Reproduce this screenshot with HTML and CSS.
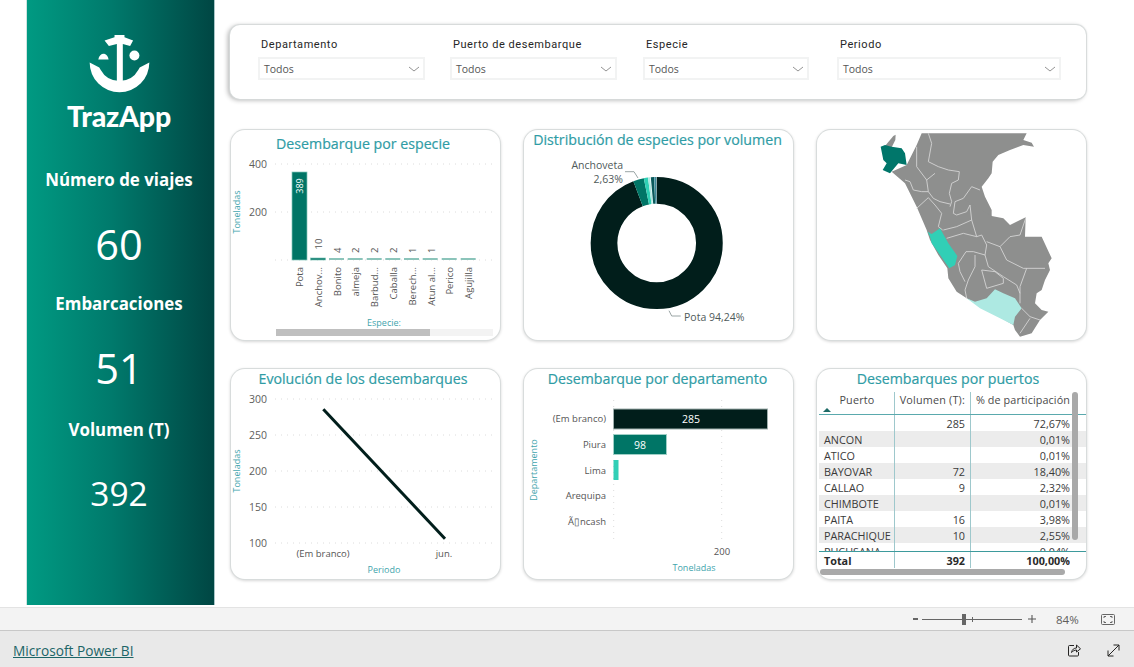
FILE: index.html
```
<!DOCTYPE html>
<html lang="es">
<head>
<meta charset="utf-8">
<title>TrazApp</title>
<link rel="stylesheet" href="styles.css">
</head>
<body>
<div class="report">
  <aside class="sidebar">
    <svg class="logo" viewBox="80 30 200 190" aria-hidden="true">
      <path class="logo-w" d="M165 45H195V52L221 62 212 78 190 72V190H172V72L148 78 135 62 165 52Z"/>
      <path class="logo-w" d="M90 128A90 90 0 0 0 270 128L241 143 237 150A65 65 0 0 1 123 150L119 143Z"/>
      <circle class="logo-w" cx="225" cy="107" r="15"/>
      <path class="logo-w" d="M116 119C118 107 126 101 134 102 141 103 146 111 147 119Z"/>
    </svg>
    <div class="brand">TrazApp</div>
    <div class="metric-label first">Número de viajes</div>
    <div class="metric-value">60</div>
    <div class="metric-label">Embarcaciones</div>
    <div class="metric-value">51</div>
    <div class="metric-label last">Volumen (T)</div>
    <div class="metric-value small">392</div>
  </aside>

  <main class="main">
    <section class="filters">
      <div class="slicer s1">
        <div class="slicer-title">Departamento</div>
        <div class="dropdown"><span>Todos</span><svg class="chev" viewBox="0 0 10 4"><path d="M0 0L5 4 10 0"/></svg></div>
      </div>
      <div class="slicer s2">
        <div class="slicer-title">Puerto de desembarque</div>
        <div class="dropdown"><span>Todos</span><svg class="chev" viewBox="0 0 10 4"><path d="M0 0L5 4 10 0"/></svg></div>
      </div>
      <div class="slicer s3">
        <div class="slicer-title">Especie</div>
        <div class="dropdown"><span>Todos</span><svg class="chev" viewBox="0 0 10 4"><path d="M0 0L5 4 10 0"/></svg></div>
      </div>
      <div class="slicer s4">
        <div class="slicer-title">Periodo</div>
        <div class="dropdown"><span>Todos</span><svg class="chev" viewBox="0 0 10 4"><path d="M0 0L5 4 10 0"/></svg></div>
      </div>
    </section>

    <section class="cards">
      <article class="card">
        <h2 class="title low off">Desembarque por especie</h2>
        <svg class="chart" viewBox="231 156 269 184">
          <g class="grid"><path d="M275 164H493M275 212H493M275 260H493"/></g>
          <text class="tick" x="267" y="168" text-anchor="end">400</text>
          <text class="tick" x="267" y="216" text-anchor="end">200</text>
          <text class="axis" transform="translate(240 212) rotate(-90)" text-anchor="middle">Toneladas</text>
          <rect class="bar-main" x="292" y="172" width="15" height="88"/>
          <rect class="bar-main" x="310.5" y="258" width="15" height="2"/>
          <path class="bar-thin" d="M329 259H344M347.700 259H362.700M366.700 259H381.700M385.300 259H400.300M404 259H419M422.700 259H437.700M441.700 259H456.700M460.700 259H475.700"/>
          <text class="dl-w" transform="translate(303 186) rotate(-90)" text-anchor="middle">389</text>
          <g class="dl">
            <text transform="translate(322 249.500) rotate(-90)">10</text>
            <text transform="translate(340.500 253) rotate(-90)">4</text>
            <text transform="translate(359 253) rotate(-90)">2</text>
            <text transform="translate(378 253) rotate(-90)">2</text>
            <text transform="translate(396.500 253) rotate(-90)">2</text>
            <text transform="translate(415.500 253) rotate(-90)">1</text>
            <text transform="translate(435 253) rotate(-90)">1</text>
          </g>
          <g class="cat rot">
            <text transform="translate(303 267) rotate(-90)">Pota</text>
            <text transform="translate(322 267) rotate(-90)">Anchov...</text>
            <text transform="translate(340.500 267) rotate(-90)">Bonito</text>
            <text transform="translate(359 267) rotate(-90)">almeja</text>
            <text transform="translate(378 267) rotate(-90)">Barbud...</text>
            <text transform="translate(396.500 267) rotate(-90)">Caballa</text>
            <text transform="translate(415.500 267) rotate(-90)">Berech...</text>
            <text transform="translate(435 267) rotate(-90)">Atun al...</text>
            <text transform="translate(453 267) rotate(-90)">Perico</text>
            <text transform="translate(472 267) rotate(-90)">Agujilla</text>
          </g>
          <text class="axis" x="384" y="326" text-anchor="middle">Especie:</text>
          <rect class="track" x="430" y="329" width="63" height="7"/>
          <rect class="thumb" x="276" y="329" width="154" height="7"/>
        </svg>
      </article>

      <article class="card">
        <h2 class="title">Distribución de especies por volumen</h2>
        <svg class="chart" viewBox="524 156 269 184">
          <g class="donut">
            <circle class="d0" cx="656.700" cy="243" r="52.700" pathLength="100" stroke-dasharray="94.240 5.760" stroke-dashoffset="25"/>
            <circle class="d1" cx="656.700" cy="243" r="52.700" pathLength="100" stroke-dasharray="2.630 97.370" stroke-dashoffset="-69.240"/>
            <circle class="d2" cx="656.700" cy="243" r="52.700" pathLength="100" stroke-dasharray="1 99" stroke-dashoffset="-71.870"/>
            <circle class="d3" cx="656.700" cy="243" r="52.700" pathLength="100" stroke-dasharray="0.500 99.500" stroke-dashoffset="-72.870"/>
            <circle class="d4" cx="656.700" cy="243" r="52.700" pathLength="100" stroke-dasharray="0.800 99.200" stroke-dashoffset="-73.550"/>
            <circle class="d5" cx="656.700" cy="243" r="52.700" pathLength="100" stroke-dasharray="0.500 99.500" stroke-dashoffset="-74.400"/>
          </g>
          <path class="leader" d="M625 171.700H634L638 178M669 310.700L671.700 316H680.700"/>
          <g class="dlab">
            <text x="623" y="169" text-anchor="end">Anchoveta</text>
            <text x="623" y="183" text-anchor="end">2,63%</text>
            <text x="684" y="321">Pota 94,24%</text>
          </g>
        </svg>
      </article>

      <article class="card map-card">
        <svg class="chart" viewBox="-129 0 807 630">
          <path class="country" d="M185 10H500L490 30 515 38 522 50 490 45 450 60 415 75 398 95 395 130 385 145 365 170 375 200 395 240 395 258 300 300 170 230 135 160 95 125 140 105 170 45Z"/>
          <path class="country" d="M395 258L430 265 450 285 497 262 495 320 545 320 575 385 565 400 570 420 555 450 545 480 530 490 525 520 545 540 565 545 540 570 515 610 480 620 465 600 460 585 320 505 290 485 265 445 262 415 235 375 210 330 200 300 170 230 300 200Z"/>
          <path class="country" d="M75 48L100 18 107 14 106 30 95 52Z"/>
          <path class="piura" d="M62 50L70 90 80 100 68 120 90 130 115 100 140 105 135 70 125 55 95 50 75 45Z"/>
          <path class="lima" d="M203 305L215 312 240 295 265 340 292 378 285 405 268 415 240 375 215 340 210 320Z"/>
          <path class="areq" d="M320 505L345 515 380 505 405 478 430 490 465 505 485 535 465 560 460 585 420 565 360 535Z"/>
          <path class="borders" d="M205 10L215 40 205 95 235 110 265 120 298 125 295 150 275 160 268 190 275 215 270 230M170 50L170 110 200 150 225 130M200 150L205 185 220 205 240 215 270 222M135 150L150 155 160 180 185 185 205 185M170 235L205 203 225 225 245 250 235 290 248 300M280 250L285 215 310 205 335 170 360 180M280 250L290 255 320 245 330 225 335 270 290 290 250 300M335 270L350 320 310 310 260 325M350 320L365 315 380 345 375 375 340 365 318 365 295 400M380 335L420 350 450 320 480 315 497 265M420 350L440 390 490 415 555 415M500 415L480 470 480 520M345 375L345 410 325 450 315 480 320 505M295 400L300 425 315 455M365 420L380 475 430 460 430 445 405 425ZM375 375L385 410 430 440 470 465 480 490M485 535L510 560 540 570M510 565L480 610"/>
        </svg>
      </article>

      <article class="card">
        <h2 class="title off">Evolución de los desembarques</h2>
        <svg class="chart" viewBox="231 395 269 184">
          <g class="grid"><path d="M275 399H493M275 435H493M275 471H493M275 507H493M275 543H493"/></g>
          <g class="tick">
            <text x="267" y="403" text-anchor="end">300</text>
            <text x="267" y="439" text-anchor="end">250</text>
            <text x="267" y="475" text-anchor="end">200</text>
            <text x="267" y="511" text-anchor="end">150</text>
            <text x="267" y="547" text-anchor="end">100</text>
          </g>
          <text class="axis" transform="translate(240 471) rotate(-90)" text-anchor="middle">Toneladas</text>
          <path class="line" d="M323.300 409.300L445 538.700"/>
          <g class="cat">
            <text x="323" y="557" text-anchor="middle">(Em branco)</text>
            <text x="444" y="557" text-anchor="middle">jun.</text>
          </g>
          <text class="axis" x="384" y="573" text-anchor="middle">Periodo</text>
        </svg>
      </article>

      <article class="card">
        <h2 class="title">Desembarque por departamento</h2>
        <svg class="chart" viewBox="524 395 269 184">
          <g class="grid"><path d="M613.700 400V544M721.700 400V544"/></g>
          <rect class="b0" x="613.500" y="409" width="154" height="20"/>
          <rect class="b1" x="613.500" y="434.500" width="53" height="20"/>
          <rect class="b2" x="613.500" y="460" width="5" height="20"/>
          <text class="dl-w big" x="691" y="423" text-anchor="middle">285</text>
          <text class="dl-w big" x="640" y="449" text-anchor="middle">98</text>
          <g class="cat">
            <text x="606" y="422" text-anchor="end">(Em branco)</text>
            <text x="606" y="448" text-anchor="end">Piura</text>
            <text x="606" y="474" text-anchor="end">Lima</text>
            <text x="606" y="499" text-anchor="end">Arequipa</text>
            <text x="606" y="525" text-anchor="end">Ã▯ncash</text>
            <text x="722" y="555" text-anchor="middle">200</text>
          </g>
          <text class="axis" transform="translate(537 470) rotate(-90)" text-anchor="middle">Departamento</text>
          <text class="axis" x="694" y="571" text-anchor="middle">Toneladas</text>
        </svg>
      </article>

      <article class="card table-card">
        <h2 class="title short">Desembarques por puertos</h2>
        <div class="tbl-wrap">
          <div class="tbl-head row">
            <div class="cell puerto-h">Puerto<i class="sort"></i></div>
            <div class="cell num vol">Volumen (T):</div>
            <div class="cell num last-col">% de participación</div>
          </div>
          <div class="tbl-body">
            <div class="row"><div class="cell"></div><div class="cell num vol">285</div><div class="cell num last-col">72,67%</div></div>
            <div class="row alt"><div class="cell">ANCON</div><div class="cell num vol"></div><div class="cell num last-col">0,01%</div></div>
            <div class="row"><div class="cell">ATICO</div><div class="cell num vol"></div><div class="cell num last-col">0,01%</div></div>
            <div class="row alt"><div class="cell">BAYOVAR</div><div class="cell num vol">72</div><div class="cell num last-col">18,40%</div></div>
            <div class="row"><div class="cell">CALLAO</div><div class="cell num vol">9</div><div class="cell num last-col">2,32%</div></div>
            <div class="row alt"><div class="cell">CHIMBOTE</div><div class="cell num vol"></div><div class="cell num last-col">0,01%</div></div>
            <div class="row"><div class="cell">PAITA</div><div class="cell num vol">16</div><div class="cell num last-col">3,98%</div></div>
            <div class="row alt"><div class="cell">PARACHIQUE</div><div class="cell num vol">10</div><div class="cell num last-col">2,55%</div></div>
            <div class="row"><div class="cell">PUCUSANA</div><div class="cell num vol"></div><div class="cell num last-col">0,04%</div></div>
          </div>
          <div class="tbl-total row">
            <div class="cell">Total</div><div class="cell num vol">392</div><div class="cell num last-col">100,00%</div>
          </div>
          <div class="vscroll"></div>
          <div class="hscroll"></div>
        </div>
      </article>
    </section>
  </main>
</div>

<div class="zoombar">
  <span class="zoom-minus"></span>
  <div class="slider"><i class="tick-mark"></i><i class="knob"></i></div>
  <svg class="zoom-plus" viewBox="0 0 9 9"><path d="M0 4.500H9M4.500 0V9"/></svg>
  <span class="zoom-pct">84%</span>
  <svg class="fit" viewBox="0 0 14 11"><rect x=".5" y=".5" width="13" height="10" rx="1"/><path d="M3 4V2.500H5M9 2.500H11V4M11 7V8.500H9M5 8.500H3V7"/></svg>
</div>
<footer class="footer">
  <a class="pbi" href="#">Microsoft Power BI</a>
  <svg class="ficon share" viewBox="0 0 14 14"><path d="M7 2.500H2.500A1 1 0 0 0 1.500 3.500V12A1 1 0 0 0 2.500 13H10.500A1 1 0 0 0 11.500 12V9"/><path d="M4.500 9.500C5 6.500 7 5 9.500 5V2L13.500 5.800 9.500 9V7C7.500 7 6 8 4.500 9.500Z"/></svg>
  <svg class="ficon expand" viewBox="0 0 13 13"><path d="M1 12L12 1M6.500 1H12V6.500M1 6.500V12H6.500"/></svg>
</footer>
</body>
</html>
```
FILE: styles.css
```
* { box-sizing: border-box; }
html, body { margin: 0; height: 667px; overflow: hidden; background: #fff; }
body { font-family: "Open Sans", "Liberation Sans", sans-serif; display: flex; flex-direction: column; }

.report { height: 607px; display: flex; padding-left: 27px; flex: none; }
.sidebar {
  width: 187px; height: 605px; flex: none; padding-right: 3px;
  background: linear-gradient(90deg, #009a82 0%, #007a6c 45%, #004643 100%);
  box-shadow: 1px 0 0 #a9c6c8, -1px 0 0 #cfe3e0;
  display: flex; flex-direction: column; align-items: center; color: #fff;
}
.logo { width: 67px; height: 63px; margin-top: 30px; flex: none; }
.logo-w { fill: #fff; }
.brand { font-family: Lato, sans-serif; font-weight: 900; font-size: 28.500px; line-height: 30px; height: 30px; margin-top: 8px; letter-spacing: -.2px; }
.metric-label { font-weight: 700; font-size: 16.900px; line-height: 30px; height: 30px; margin-top: 15px; }
.metric-label.first { margin-top: 34px; }
.metric-label.last { margin-top: 17px; }
.metric-value { font-size: 41.500px; line-height: 60px; height: 60px; margin-top: 19px; }
.metric-value.small { font-size: 33.500px; margin-top: 18px; }

.main { flex: 1; min-width: 0; padding: 25px 0 0 16px; }
.filters {
  width: 856px; height: 74px; border-radius: 10px; background: #fff; position: relative;
  box-shadow: 0 0 1px 1px #d6dada, -2px 1px 5px rgba(0,0,0,.32);
  display: flex; padding-left: 28px; padding-top: 13px;
}
.slicer { flex: none; }
.slicer.s1 { width: 167px; margin-right: 25px; }
.slicer.s2 { width: 167px; margin-right: 26px; }
.slicer.s3 { width: 166px; margin-right: 28px; }
.slicer.s4 { width: 224px; }
.slicer-title { font-family: Roboto, sans-serif; font-size: 11px; line-height: 14px; letter-spacing: .55px; color: #262626; padding-left: 3px; height: 19px; }
.dropdown {
  height: 23px; border: 2px solid #f2f3f3; display: flex; align-items: center; justify-content: space-between;
  padding: 0 4px 0 4px; font-family: "Open Sans", sans-serif; font-size: 10.500px; color: #555;
}
.chev { width: 10px; height: 4px; margin-right: 0; fill: none; stroke: #777; stroke-width: .8; overflow: visible; }

.cards { display: grid; grid-template-columns: repeat(3, 269px); grid-template-rows: 210px 210px; gap: 29px 24px; margin: 31px 0 0 1px; }
.card { background: #fff; border-radius: 14px; box-shadow: 0 0 0 1px #d8dcdc, 0 1px 3px 1px rgba(0,0,0,.16); overflow: hidden; }
.title { margin: 0; height: 26px; padding: 0 2px 0 0; text-align: center; font-size: 14.200px; line-height: 20px; font-weight: 400; color: #2f9ca5; white-space: nowrap; -webkit-text-stroke: .2px #2f9ca5; }
.title.off { padding-right: 5px; }
.title.low { padding-top: 4px; }
.title.short { height: 23px; padding-right: 7px; }
.chart { display: block; width: 269px; height: 184px; overflow: visible; }
.map-card .chart { height: 210px; }

.grid path { fill: none; stroke: #dcdcdc; stroke-width: 1; stroke-dasharray: 1 5; }
.tick, .tick text { font-size: 10.500px; fill: #605e5c; }
.axis { font-size: 9px; fill: #3fa5ad; }
.cat text { font-size: 9.500px; fill: #555; }
.rot text { text-anchor: end; }
.dl text { font-size: 9.500px; fill: #555; }
.dl-w { font-size: 9px; fill: #fff; }
.dl-w.big { font-size: 10.500px; }
.bar-main { fill: #007566; stroke: #83c7ba; stroke-width: .7; }
.bar-thin { stroke: #8bc4ba; stroke-width: 2; fill: none; }
.track { fill: #f3f3f3; }
.thumb { fill: #bfbfbf; }

.donut circle { fill: none; stroke-width: 26.700; }
.d0 { stroke: #011e1b; }
.d1 { stroke: #007566; }
.d2 { stroke: #2fd0b5; }
.d3 { stroke: #aee9e2; }
.d4 { stroke: #0a5a5c; }
.d5 { stroke: #3a8a9a; }
.leader { fill: none; stroke: #9aa5a5; stroke-width: 1; }
.dlab text { font-size: 10.500px; fill: #4f5a5a; }

.country { fill: #8e8f8e; }
.piura { fill: #00766a; }
.lima { fill: #31cfb6; }
.areq { fill: #ade9e2; }
.borders { fill: none; stroke: #dadada; stroke-width: 2.500; }

.line { fill: none; stroke: #011e1b; stroke-width: 3; }
.b0 { fill: #011e1b; stroke: #9fb0ae; stroke-width: 1; }
.b1 { fill: #007566; stroke: #9fcfc6; stroke-width: 1; }
.b2 { fill: #31cfb6; }

.tbl-wrap { position: relative; margin: 0 0 0 2px; font-size: 10.800px; color: #3a3a3a; }
.row { display: grid; grid-template-columns: 76px 75px 100px; }
.cell { padding: 0 5px; line-height: 17px; white-space: nowrap; overflow: hidden; }
.num { text-align: right; }
.vol { box-shadow: -1px 0 0 #9ec8cc, 1px 0 0 #9ec8cc; padding-right: 5px; }
.last-col { padding-right: 0; }
.tbl-head { height: 23px; border-bottom: 1.500px solid #5aa9ad; color: #4a4a4a; letter-spacing: .2px; }
.tbl-head .cell { height: 22px; line-height: 16px; padding-left: 0; }
.puerto-h { text-align: center; position: relative; padding-right: 0; }
.tbl-head .last-col { letter-spacing: .1px; }
.sort { position: absolute; left: 4px; top: 16px; border: 4px solid transparent; border-top: 0; border-bottom: 4px solid #1d6a66; }
.tbl-body { height: 136px; overflow: hidden; }
.tbl-body .row { height: 16px; }
.alt { background: #ececec; }
.tbl-total { height: 17px; border-top: 1px solid #3d9a9c; font-weight: 700; color: #2a2a2a; }
.tbl-total .cell { line-height: 17px; }
.vscroll { position: absolute; left: 253px; top: 0; width: 6px; height: 148px; border-radius: 3px; background: #a9a9a9; }
.hscroll { position: absolute; left: 1px; top: 177px; width: 245px; height: 6px; border-radius: 3px; background: #a9a9a9; }

.zoombar { height: 24px; flex: none; background: #f3f3f3; border-top: 1px solid #e3e3e3; border-bottom: 1px solid #c8c8c8; display: flex; align-items: center; color: #605e5c; padding-left: 913px; }
.zoom-minus { width: 5px; height: 2px; background: #666; flex: none; }
.slider { width: 100px; height: 1px; background: #666; margin-left: 4px; position: relative; flex: none; }
.knob { position: absolute; left: 40px; top: -5px; width: 4px; height: 11px; background: #666; }
.tick-mark { position: absolute; left: 50px; top: -2px; width: 1px; height: 5px; background: #666; }
.zoom-plus { width: 8px; height: 8px; margin-left: 6px; flex: none; fill: none; stroke: #555; stroke-width: 1.200; }
.zoom-pct { font-size: 11.500px; margin-left: 20px; width: 24px; flex: none; }
.fit { width: 14px; height: 11px; margin-left: 21px; flex: none; fill: none; stroke: #666; stroke-width: 1; }

.footer { flex: 1; background: #e9e9e9; display: flex; align-items: center; padding-left: 13px; padding-top: 2px; }
.pbi { font-size: 13.700px; color: #1c6567; text-decoration: underline; width: 1055px; flex: none; margin-top: 1px; }
.ficon { fill: none; stroke: #252423; stroke-width: 1; flex: none; }
.share { width: 14px; height: 14px; margin-left: -1px; }
.expand { width: 13px; height: 13px; margin-left: 26px; }
```
